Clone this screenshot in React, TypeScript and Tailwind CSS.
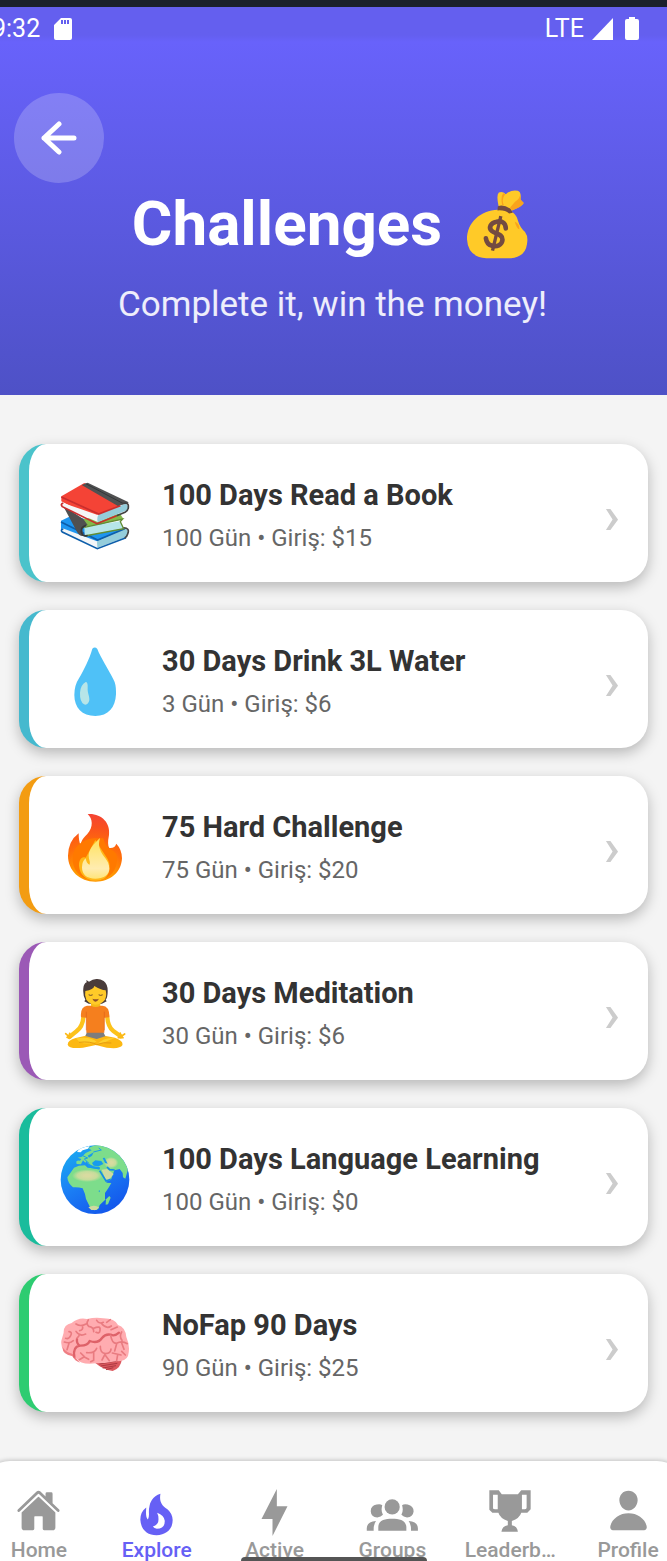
import type { ReactNode } from 'react';
import { IoHome, IoPerson } from 'react-icons/io5';

const art = 'block size-[70px] shrink-0';

function MoneyBag() {
  return (
    <svg viewBox="54 565 190 210" className="h-[70px] w-[63px]" aria-hidden="true">
      <path fill="#ffca28" d="M57 716C57 665 98 629 150 627C183 623 205 634 211 661Q217 681 232 694Q242 707 238 730Q233 769 190 773H115Q60 770 57 716Z" />
      <path fill="#ffca28" d="M152 615Q145 583 153 575Q164 570 174 580Q190 566 210 570Q222 574 218 596L228 607Q225 616 191 630Z" />
      <path fill="#f9a31c" d="M172 580Q160 595 168 613L163 613Q158 588 166 577ZM217 576Q220 592 202 603L187 620L192 629Q222 620 228 607L219 597ZM201 663Q216 668 215 686Q207 684 201 663Z" />
      <path fill="#734b41" d="M150 617Q165 609 188 624L195 636L184 638Q171 627 149 629Z" />
      <path fill="none" stroke="#734b41" strokeWidth="14" strokeLinecap="round" d="M174 683C173 665 161 660 146 663C128 666 121 682 132 691C143 700 165 700 164 717C163 734 146 740 131 735Q117 731 114 713" />
      <path fill="none" stroke="#734b41" strokeWidth="10" d="M159 646L134 750" />
    </svg>
  );
}

function Books() {
  return (
    <svg viewBox="180 154 210 210" className={art} aria-hidden="true">
      <path fill="#1e96f0" d="M183 273L214 258L370 295L291 346L183 300Z" />
      <path fill="#f3f6f8" d="M186 295L291 335L382 298V318L292 353L186 311Z" />
      <path fill="#94cddb" d="M291 335L376 296Q388 303 380 321L292 354Z" />
      <path fill="none" stroke="#0d5eaa" strokeWidth="5" d="M183 277L293 331L374 297M190 297Q180 301 187 307L292 357L378 324" />
      <path fill="none" stroke="#454545" strokeWidth="5" d="M368 295Q391 293 383 313Q381 321 374 325" />
      <path fill="#83b94a" d="M250 268L360 252L370 267L250 296Z" />
      <path fill="#b6e6e9" d="M253 291L362 275L368 297L254 319Z" />
      <path fill="none" stroke="#628d33" strokeWidth="4" d="M253 293L368 268L361 276L371 297L254 319" />
      <path fill="#505050" d="M189 228L250 268L263 286L246 295L250 319Q238 321 230 305Z" />
      <path fill="none" stroke="#373737" strokeWidth="5" d="M258 287Q242 292 244 307Q246 321 263 318" />
      <path fill="#f44336" d="M184 200L253 160L385 225L293 271L184 215Z" />
      <path fill="#505152" d="M245 166L263 159L386 218Q380 224 355 230Z" />
      <path fill="none" stroke="#343739" strokeWidth="3" d="M257 162L374 224" />
      <path fill="#f5f6f7" d="M187 219L291 255L380 220L384 239L293 277L187 231Z" />
      <path fill="#94cddb" d="M296 254L377 222Q390 228 381 242L293 278Q290 264 296 254Z" />
      <path fill="none" stroke="#c92d2d" strokeWidth="5" d="M184 202L296 253L361 228M190 220Q180 223 187 231L291 282L350 258" />
      <path fill="none" stroke="#424242" strokeWidth="5" d="M366 222Q387 216 385 231Q386 241 375 248L350 258" />
    </svg>
  );
}

function Droplet() {
  return (
    <svg viewBox="180 142 210 210" className={art} aria-hidden="true">
      <path fill="#4fc1f7" d="M277 147Q285 140 292 148C302 174 326 210 340 239Q349 254 348 284C346 324 325 349 286 349C246 349 223 324 223 286Q223 257 237 236C251 211 269 177 277 147Z" />
      <path fill="#b7e5e8" d="M257 247Q264 247 263 264C262 282 269 287 268 302Q263 319 252 314Q239 305 240 279Q242 255 257 247Z" />
    </svg>
  );
}

function Fire() {
  return (
    <svg viewBox="180 145 210 210" className={art} aria-hidden="true">
      <defs>
        <radialGradient id="fire-outer" gradientUnits="userSpaceOnUse" cx="278" cy="350" r="205">
          <stop offset=".3" stopColor="#ff9800" />
          <stop offset=".55" stopColor="#ff6d0a" />
          <stop offset=".8" stopColor="#f9501f" />
          <stop offset="1" stopColor="#f44336" />
        </radialGradient>
        <linearGradient id="fire-inner" x1="0" y1="0" x2="0" y2="1">
          <stop offset="0" stopColor="#ffe25c" />
          <stop offset=".75" stopColor="#ffecb0" />
          <stop offset="1" stopColor="#ffe57a" />
        </linearGradient>
      </defs>
      <path fill="url(#fire-outer)" d="M263 148C304 145 332 174 327 211Q321 241 328 250C340 251 346 246 349 237Q366 255 366 281C364 324 330 351 287 351C238 351 204 316 204 273Q205 229 236 206Q236 231 242 242C243 227 252 218 262 208C281 187 278 162 263 148Z" />
      <path fill="#ff7900" d="M218 284C218 246 245 226 280 221H310Q316 246 330 254Q354 262 351 289C349 325 320 347 286 348C246 347 218 320 218 284Z" />
      <path fill="#ffb819" d="M237 304C236 281 249 275 257 279L286 226L317 274Q332 293 328 316C324 339 309 348 286 348C259 348 239 330 237 304Z" />
      <path fill="url(#fire-inner)" d="M300 220Q294 240 300 254C306 276 328 285 328 312C328 332 309 341 286 342C260 342 246 330 246 308Q246 290 257 281Q260 298 269 300Q271 292 267 282C261 256 284 236 300 220Z" />
    </svg>
  );
}

function Meditation() {
  return (
    <svg viewBox="180 148 210 210" className={art} aria-hidden="true">
      <path fill="none" stroke="#fcc21b" strokeWidth="13" strokeLinecap="round" strokeLinejoin="round" d="M251 255Q249 292 229 305L208 322M321 255Q323 292 340 304L362 320" />
      <path fill="none" stroke="#fbb917" strokeWidth="5" strokeLinecap="round" d="M197 312L207 321L209 311M374 313L362 321L361 310M201 323H213M369 324H355" />
      <path fill="#fcb813" d="M257 318Q282 311 314 318L345 324Q371 333 367 347Q360 359 320 354L288 346L249 354Q207 359 203 345Q203 332 227 325Z" />
      <path fill="#ffd02c" d="M228 326Q270 319 290 336Q263 346 239 338ZM291 343Q317 320 344 326Q330 330 310 340Z" />
      <path fill="none" stroke="#e59b11" strokeWidth="3" d="M237 338Q272 334 290 345Q310 336 334 340" />
      <path fill="#7d7d7d" d="M261 307H310L316 320L290 328L256 319Z" />
      <path fill="#f57f1e" d="M243 263Q240 231 261 228H307Q329 229 328 263L313 264V309H259V264Z" />
      <path fill="none" stroke="#df611a" strokeWidth="2" d="M259 246V302M313 246V302" />
      <path fill="#493c3a" d="M250 176Q251 162 260 158L259 151L267 156Q289 141 311 154Q324 164 323 186Q323 203 317 210L320 215L306 222H266L253 215L256 210Q248 196 250 176Z" />
      <path fill="#f6ba18" d="M273 214H301V228Q287 236 273 228Z" />
      <path fill="#ffca28" d="M256 184Q281 180 283 169Q302 181 317 182Q321 198 315 210Q304 224 287 225Q269 224 259 210Q253 196 256 184Z" />
      <path fill="none" stroke="#6d4b2e" strokeWidth="3" strokeLinecap="round" d="M267 196Q272 199 277 196M297 196Q302 199 307 196" />
      <path fill="#8a4d2a" d="M277 207Q287 211 297 207Q292 216 286 216Q281 215 277 207Z" />
    </svg>
  );
}

function Globe() {
  return (
    <svg viewBox="180 142 210 210" className={art} aria-hidden="true">
      <defs>
        <linearGradient id="globe-sea" x1="0" y1="0" x2=".6" y2="1">
          <stop offset="0" stopColor="#18b4ef" />
          <stop offset=".5" stopColor="#1b82f5" />
          <stop offset="1" stopColor="#1459ec" />
        </linearGradient>
        <clipPath id="globe-edge"><circle cx="285" cy="246" r="103" /></clipPath>
        <radialGradient id="globe-sand">
          <stop offset=".2" stopColor="#d8dba0" />
          <stop offset=".65" stopColor="#c6dc9b" />
          <stop offset="1" stopColor="#7ddd8b" />
        </radialGradient>
      </defs>
      <circle cx="285" cy="246" r="103" fill="url(#globe-sea)" />
      <g clipPath="url(#globe-edge)">
        <path fill="#7ddd8b" d="M230 199Q225 187 240 189L244 184L233 180L246 177L257 166L275 158L265 151L287 142H330L390 194L376 243L369 239L368 226L359 214L343 218L333 246L318 252L307 237L301 218L292 211L278 211L266 202L260 190L256 195L249 188L243 200Z" />
        <path fill="#7ddd8b" d="M222 210Q235 203 255 203L263 210L280 211L304 218L313 241L320 255L334 256Q326 271 315 286V307L299 322L295 334Q283 341 273 334L258 304Q257 291 248 272Q235 268 219 269Q203 256 202 239Z" />
        <path fill="#7ddd8b" d="M318 305L328 295L332 300L324 320L317 321Z" />
        <ellipse cx="262" cy="234" rx="46" ry="19" fill="url(#globe-sand)" />
        <ellipse cx="333" cy="195" rx="22" ry="17" fill="url(#globe-sand)" />
        <path fill="#cfdaa0" d="M305 216L321 214L341 229L326 247L316 244ZM265 329Q282 319 297 329L289 337H274Z" />
        <path fill="#ffffff" d="M231 163L240 151L269 145L264 153L248 158L242 164Z" />
        <path fill="none" stroke="#168ae7" strokeWidth="5" d="M299 219L318 250L332 245M321 208L329 216L344 217" />
        <path fill="#189bed" d="M246 198L258 203L268 210L282 213L300 214L299 208L281 206L272 201L262 196L264 206L252 198ZM276 196L286 188L304 190L310 199L296 206L281 204ZM308 181L314 180L323 198L315 196ZM263 174L281 164L276 174L267 180ZM295 280L300 278L299 284Z" />
        <path fill="none" stroke="#179ded" strokeWidth="3" d="M248 174L263 181L253 184L268 198M280 163L304 157L296 151" />
      </g>
    </svg>
  );
}

function Brain() {
  return (
    <svg viewBox="180 142 210 210" className={art} aria-hidden="true">
      <path fill="#dc5a60" d="M286 294L366 286Q362 315 338 322Q309 318 286 298Z" />
      <path fill="none" stroke="#ad3942" strokeWidth="3" d="M298 301L354 291M302 307L352 299M308 313L348 306M318 318L340 312" />
      <path fill="#ffacb0" d="M191 207Q190 183 215 178Q236 160 261 166Q287 160 310 164Q345 165 354 184Q376 190 379 220Q392 249 384 277Q377 294 347 293L314 298L287 299Q241 304 231 285L214 276Q180 262 184 231Z" />
      <path fill="#ef7e83" d="M187 250Q201 269 217 270L240 297Q224 292 217 277Q188 274 187 250Z" />
      <g fill="none" strokeLinecap="round" strokeLinejoin="round">
        <path stroke="#de6269" strokeWidth="7" d="M223 279Q218 250 239 246Q263 247 269 232Q294 241 306 223Q316 210 332 213Q344 219 357 207M239 246Q229 239 231 226" />
        <path stroke="#e97b80" strokeWidth="5" d="M193 235Q209 241 220 231M207 239L201 258M207 204Q218 205 212 216Q206 228 197 224M228 203Q239 220 257 211M237 216L231 224M228 181Q242 190 258 181M247 185Q251 200 239 201M265 169Q257 180 266 188Q282 191 281 204M281 194Q303 184 300 200Q299 211 288 206M290 170Q297 182 310 176M304 179Q319 198 334 187M331 168L320 176M333 198L352 190M365 205Q357 218 366 230M332 215Q336 240 350 239Q365 230 382 240M350 240L344 262M365 238L372 257M238 288L253 279L242 268M253 280L266 287M260 267Q284 269 290 254M281 264L281 290L272 294M301 248Q300 267 316 270Q333 269 333 256M316 270L306 289M316 275L328 291M337 268L363 274M353 273L350 291M365 263L376 274" />
      </g>
    </svg>
  );
}

type Challenge = { title: string; detail: string; border: string; picture: ReactNode };

const challenges: Challenge[] = [
  { title: '100 Days Read a Book', detail: '100 Gün • Giriş: $15', border: 'border-[#4bc3cb]', picture: <Books /> },
  { title: '30 Days Drink 3L Water', detail: '3 Gün • Giriş: $6', border: 'border-[#45b9ce]', picture: <Droplet /> },
  { title: '75 Hard Challenge', detail: '75 Gün • Giriş: $20', border: 'border-[#f39c12]', picture: <Fire /> },
  { title: '30 Days Meditation', detail: '30 Gün • Giriş: $6', border: 'border-[#9b59b6]', picture: <Meditation /> },
  { title: '100 Days Language Learning', detail: '100 Gün • Giriş: $0', border: 'border-[#1abc9c]', picture: <Globe /> },
  { title: 'NoFap 90 Days', detail: '90 Gün • Giriş: $25', border: 'border-[#2ecc71]', picture: <Brain /> },
];

function FlameIcon() {
  return (
    <svg viewBox="420 131 100 128" className="mt-1 h-[43px] w-[33px]" fill="currentColor" aria-hidden="true">
      <path fillRule="evenodd" d="M482 132Q446 143 447 190Q448 204 444 210Q436 205 439 174Q421 187 421 211C423 242 443 258 470 258C500 257 519 239 519 212Q518 191 503 179C484 167 478 153 482 132ZM472 190Q493 198 495 214Q496 238 471 238Q463 237 459 231Q477 226 476 208Q476 198 472 190Z" />
    </svg>
  );
}

function BoltIcon() {
  return (
    <svg viewBox="781 118 80 141" className="h-[47px] w-[27px]" fill="currentColor" aria-hidden="true">
      <path d="M828 118V170H860L815 259V208H782Z" />
    </svg>
  );
}

function GroupsIcon() {
  return (
    <svg viewBox="101 146 158 97" className="mt-1 h-[32px] w-[53px]" fill="currentColor" aria-hidden="true">
      <circle cx="179" cy="170" r="23" />
      <path d="M149 165Q143 160 132 163Q114 166 114 183Q115 201 134 202Q145 201 151 194Q144 181 149 165ZM209 165Q215 160 226 163Q244 167 244 184Q242 201 224 202Q213 201 207 194Q214 181 209 165ZM137 242V230C138 210 158 206 179 206S220 210 222 230V242ZM102 242V235Q102 215 130 213Q122 224 123 242ZM257 242V235Q257 215 229 213Q237 224 236 242Z" />
    </svg>
  );
}

function TrophyIcon() {
  return (
    <svg viewBox="470 122 125 125" className="mb-1 size-[42px]" fill="currentColor" aria-hidden="true">
      <path fillRule="evenodd" d="M471 123H499L508 135H556L566 123H594V179L584 190H566Q561 207 538 214V227Q554 230 556 246H507Q509 230 526 227V214Q503 207 498 190H480L471 181ZM482 136V176Q482 179 488 179H496V136ZM568 136V179H577Q582 179 582 174V136Z" />
    </svg>
  );
}

const tabs: { label: string; icon: ReactNode; active?: boolean }[] = [
  { label: 'Home', icon: <IoHome className="mb-1 size-[45px]" /> },
  { label: 'Explore', icon: <FlameIcon />, active: true },
  { label: 'Active', icon: <BoltIcon /> },
  { label: 'Groups', icon: <GroupsIcon /> },
  { label: 'Leaderb…', icon: <TrophyIcon /> },
  { label: 'Profile', icon: <IoPerson className="mb-1 size-[45px]" /> },
];

function StatusBar() {
  return (
    <div className="flex h-[27px] items-center justify-between pr-7 text-[25px] leading-[27px]">
      <div className="-ml-2 flex items-center gap-3.5">
        <span>9:32</span>
        <svg viewBox="0 0 18 22" className="h-[22px] w-[18px]" aria-hidden="true">
          <path fill="currentColor" fillRule="evenodd" d="M7 0H16Q18 0 18 2V20Q18 22 16 22H2Q0 22 0 20V7ZM7 2V6H9V2ZM10 2V6H12V2ZM13 2V6H15V2Z" />
        </svg>
      </div>
      <div className="flex items-center">
        <span>LTE</span>
        <svg viewBox="0 0 21 22" className="ml-2 h-[22px] w-[21px]" aria-hidden="true">
          <path fill="currentColor" d="M21 0V22H0Z" />
        </svg>
        <svg viewBox="0 0 14 23" className="ml-3 h-[23px] w-[14px]" aria-hidden="true">
          <path fill="currentColor" d="M4 0H10V2H12Q14 2 14 4V21Q14 23 12 23H2Q0 23 0 21V4Q0 2 2 2H4Z" />
        </svg>
      </div>
    </div>
  );
}

export default function App() {
  return (
    <div className="relative min-h-screen overflow-hidden bg-[#f4f4f4] font-['Roboto','Noto_Sans',sans-serif]">
      <header className="border-t-[7px] border-[#1b212c] text-white">
        <div className="bg-linear-to-b from-[#645fef] from-80% to-[#6862fb] pt-2">
          <StatusBar />
        </div>
        <div className="bg-linear-to-b from-[#6862fb] to-[#4e51c6] pt-[51px] pr-5 pb-[67px] pl-3.5">
          <button type="button" aria-label="Back" className="flex size-[90px] items-center justify-center rounded-full bg-white/20">
            <svg viewBox="0 0 36 34" className="h-[34px] w-[36px]" fill="none" stroke="currentColor" strokeWidth="5" strokeLinecap="round" strokeLinejoin="round" aria-hidden="true">
              <path d="M18 3L3 17L18 31M3 17H33" />
            </svg>
          </button>
          <h1 className="mt-[3px] flex items-center justify-center gap-6 text-[62px] leading-[76px] font-bold">
            Challenges
            <MoneyBag />
          </h1>
          <p className="mt-5 pl-1 text-center text-[35px] leading-[46px] text-white/90">Complete it, win the money!</p>
        </div>
      </header>

      <main className="flex flex-col gap-7 px-[19px] py-[49px]">
        {challenges.map((item) => (
          <a
            key={item.title}
            href="#challenge"
            className={`flex h-[138px] items-center rounded-[27px] border-l-[10px] bg-white pt-1.5 pr-7 pl-[31px] shadow-[0_5px_14px_rgba(0,0,0,0.25)] ${item.border}`}
          >
            {item.picture}
            <span className="ml-8 flex min-w-0 flex-1 flex-col gap-[3px]">
              <span className="text-[29px] leading-[40px] font-bold text-[#333333]">{item.title}</span>
              <span className="text-[24px] leading-[40px] text-[#666666]">{item.detail}</span>
            </span>
            <span className="text-[54px] leading-[48px] font-medium text-[#cccccc]" aria-hidden="true">›</span>
          </a>
        ))}
      </main>

      <nav className="-mx-5 flex h-[100px] rounded-t-[30px] bg-white pt-7 shadow-[0_-1px_4px_rgba(0,0,0,0.2)]" aria-label="Main">
        {tabs.map((tab) => (
          <a
            key={tab.label}
            href="#tab"
            aria-current={tab.active ? 'page' : undefined}
            className={`flex flex-1 flex-col items-center ${tab.active ? 'text-[#6660f5]' : 'text-[#999999]'}`}
          >
            <span className="flex h-[47px] shrink-0 items-center">{tab.icon}</span>
            <span className="text-[21px] leading-[29px] font-medium">{tab.label}</span>
          </a>
        ))}
      </nav>
      <div className="absolute bottom-0 left-1/2 h-1 w-[186px] -translate-x-1/2 rounded-t bg-[#555555]" />
    </div>
  );
}
